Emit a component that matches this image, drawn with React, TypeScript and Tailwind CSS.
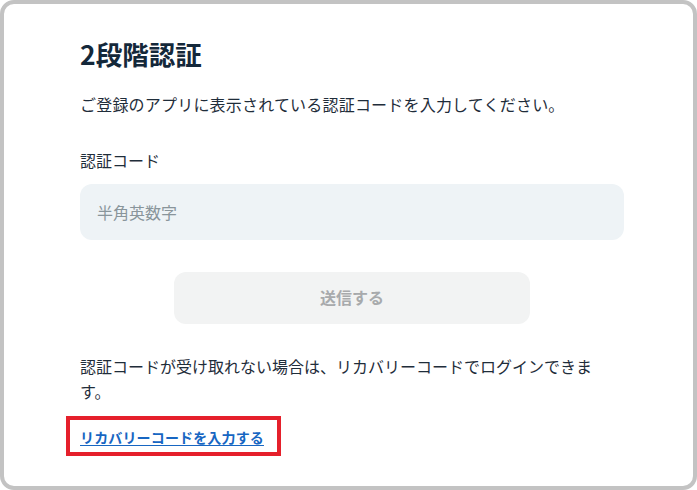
import React from 'react';

export default function App() {
  return (
    <div className="w-[697px] h-[490px] bg-white" style={{ fontFamily: '"Noto Sans CJK JP", "Noto Sans", sans-serif' }}>
      <div className="w-full h-full border-4 border-[#c3c3c3] rounded-[14px] pl-[76px] pr-[69px] pt-[30px]">
        <h1 className="text-[26.5px] leading-[39px] font-bold text-[#14283a]">2段階認証</h1>
        <p className="mt-[19px] text-[16px] leading-[24px] tracking-[0.2px] text-[#1f2d3a]">
          ご登録のアプリに表示されている認証コードを入力してください。
        </p>

        <label className="block mt-[32px] text-[16px] leading-[24px] text-[#1f2d3a]">認証コード</label>
        <input
          type="text"
          placeholder="半角英数字"
          className="mt-[12px] w-full h-[56px] rounded-[12px] bg-[#eef3f6] px-[17px] text-[16px] text-[#1f2d3a] placeholder:text-[#89959b] outline-none"
        />

        <div className="mt-[32px] flex justify-center">
          <button
            disabled
            className="w-[356px] h-[52px] rounded-[12px] bg-[#f2f3f3] pb-[3px] text-[16px] font-bold text-[#a8aaac]"
          >
            送信する
          </button>
        </div>

        <p className="mt-[30px] max-w-[540px] text-[16px] leading-[25px] text-[#1f2d3a]">
          認証コードが受け取れない場合は、リカバリーコードでログインできます。
        </p>

        <div className="mt-[12px] -ml-[14px]">
          <span className="inline-block border-[4px] border-[#e5202b] pl-[10px] pr-[13px] py-[4px]">
            <a href="#" className="text-[14px] leading-[19px] font-bold tracking-[0.15px] text-[#1766c2] underline underline-offset-2">
              リカバリーコードを入力する
            </a>
          </span>
        </div>
      </div>
    </div>
  );
}
